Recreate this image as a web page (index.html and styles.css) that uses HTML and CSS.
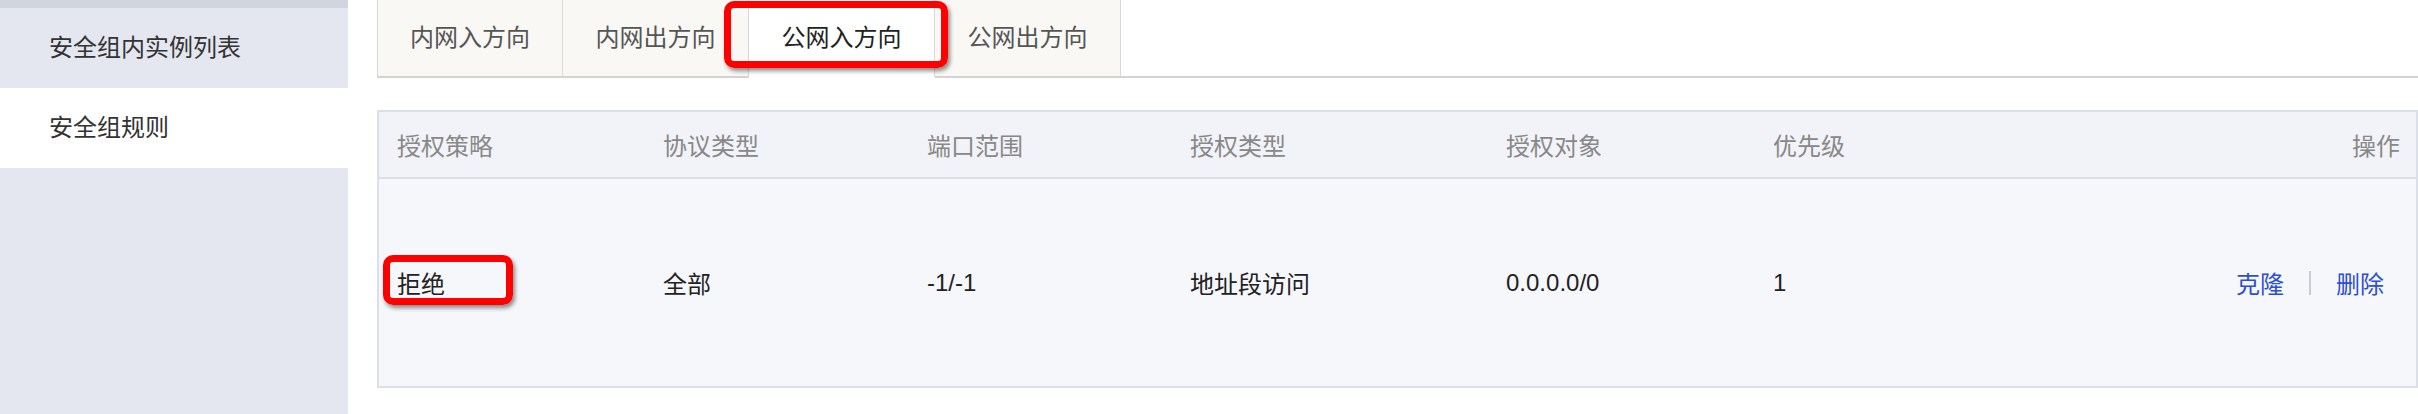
FILE: index.html
```html
<!DOCTYPE html>
<html lang="zh-CN">
<head>
<meta charset="utf-8">
<title>安全组规则</title>
<link rel="stylesheet" href="styles.css">
</head>
<body>
<div class="page">
  <aside class="sidebar">
    <div class="side-top"></div>
    <div class="side-item">安全组内实例列表</div>
    <div class="side-item active">安全组规则</div>
    <div class="side-rest"></div>
  </aside>
  <main class="main">
    <div class="tabs">
      <div class="tab">内网入方向</div>
      <div class="tab">内网出方向</div>
      <div class="tab active">公网入方向</div>
      <div class="tab">公网出方向</div>
      <div class="tab-fill"></div>
    </div>
    <div class="table">
      <div class="row head">
        <div class="cell">授权策略</div>
        <div class="cell">协议类型</div>
        <div class="cell">端口范围</div>
        <div class="cell">授权类型</div>
        <div class="cell">授权对象</div>
        <div class="cell">优先级</div>
        <div class="cell op">操作</div>
      </div>
      <div class="row body">
        <div class="cell">拒绝</div>
        <div class="cell">全部</div>
        <div class="cell">-1/-1</div>
        <div class="cell">地址段访问</div>
        <div class="cell">0.0.0.0/0</div>
        <div class="cell">1</div>
        <div class="cell actions"><a class="link">克隆</a><span class="sep"></span><a class="link">删除</a></div>
      </div>
    </div>
  </main>
  <div class="mark mark-tab"></div>
  <div class="mark mark-cell"></div>
</div>
</body>
</html>
```

FILE: styles.css
```css
* { box-sizing: border-box; }
html, body { margin: 0; padding: 0; background: #fff; }
body {
  font-family: "Liberation Sans", "Noto Sans CJK SC", sans-serif;
  font-size: 24px;
  color: #222;
}
.page {
  position: relative;
  display: flex;
  width: 2418px;
  height: 414px;
  overflow: hidden;
}
.sidebar {
  width: 348px;
  flex: none;
  display: flex;
  flex-direction: column;
  background: #e4e7f0;
}
.side-top { height: 8px; background: #d1d5df; }
.side-item {
  height: 80px;
  line-height: 80px;
  padding-left: 49px;
  color: #333;
  background: #e4e7f0;
}
.side-item.active { background: #fff; }
.side-rest { flex: 1; }

.main {
  flex: 1;
  padding-left: 29px;
  display: flex;
  flex-direction: column;
}
.tabs {
  display: flex;
  height: 78px;
}
.tab {
  width: 186px;
  height: 78px;
  line-height: 76px;
  text-align: center;
  color: #555;
  background: #f9f8f5;
  border-right: 1px solid #d8d8d8;
  border-bottom: 2px solid #d3d3d3;
}
.tab:first-child { border-left: 1px solid #d8d8d8; }
.tab.active {
  background: #fff;
  color: #222;
  border-bottom-color: #fff;
}
.tab-fill {
  flex: 1;
  border-bottom: 2px solid #d3d3d3;
}

.table {
  margin-top: 32px;
  border: 2px solid #dcdfe7;
  background: #f6f7fa;
}
.row {
  display: grid;
  grid-template-columns: 266px 264px 263px 316px 267px 1fr 1fr;
  align-items: center;
}
.row.head {
  height: 67px;
  background: #f2f3f8;
  color: #888;
  border-bottom: 2px solid #dcdfe7;
}
.row.body {
  height: 207px;
  color: #222;
}
.cell { padding-left: 18px; white-space: nowrap; }
.cell.op { text-align: right; padding-right: 16px; }
.cell.actions {
  display: flex;
  justify-content: flex-end;
  align-items: center;
  gap: 25px;
  padding-right: 32px;
}
.link { color: #2a4fd0; cursor: pointer; }
.sep {
  width: 2px;
  height: 24px;
  background: #c8ccd4;
}

.mark {
  position: absolute;
  border: 7px solid #ff0000;
  border-radius: 10px;
  box-shadow: 2px 3px 4px rgba(0,0,0,0.45);
}
.mark-tab {
  left: 724px;
  top: 1px;
  width: 224px;
  height: 67px;
}
.mark-cell {
  left: 383px;
  top: 255px;
  width: 130px;
  height: 50px;
}
```
